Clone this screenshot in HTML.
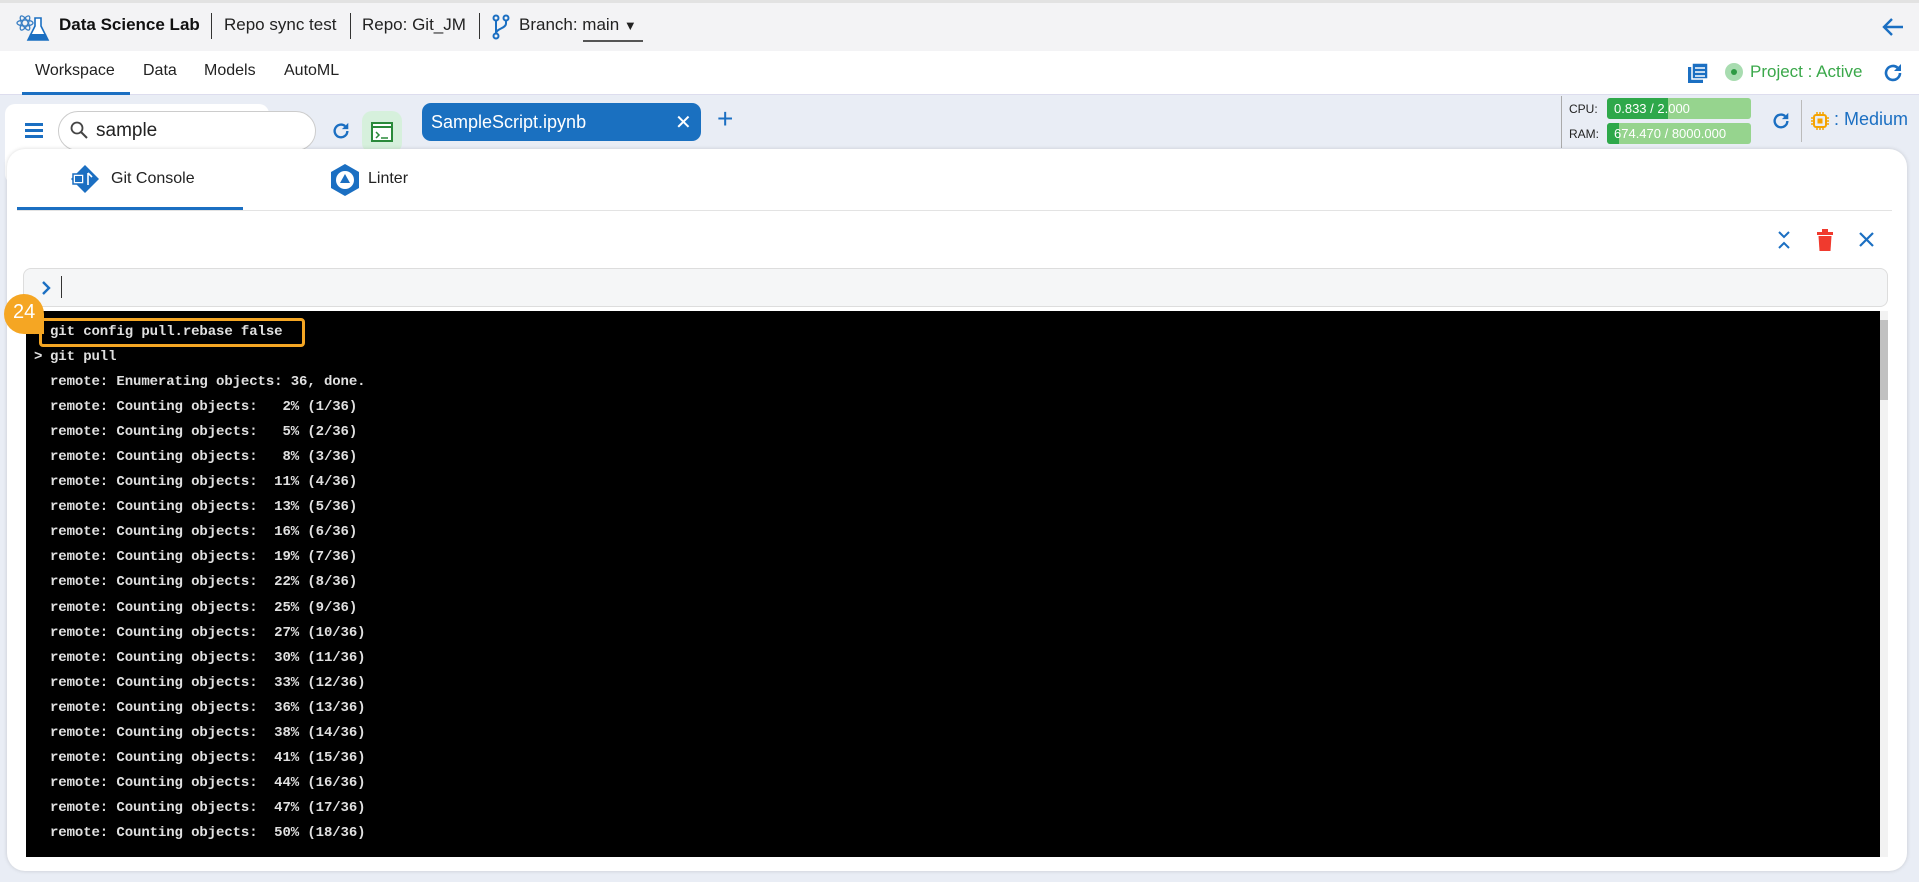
<!DOCTYPE html>
<html><head><meta charset="utf-8"><style>
*{box-sizing:border-box;margin:0;padding:0}
body{width:1919px;height:882px;overflow:hidden;background:#e9edf5;font-family:"Liberation Sans",sans-serif;position:relative;color:#222}
.abs{position:absolute}
#hdr{left:0;top:0;width:1919px;height:51px;background:#f3f3f5;border-top:3px solid #e2e2e2}
#nav{left:0;top:51px;width:1919px;height:44px;background:#fff;border-bottom:1px solid #dde}
.t18{font-size:17px;top:15px;white-space:nowrap}
.sep{width:1px;height:26px;background:#333;top:13px}
.nv{font-size:16px;top:62px;color:#222}
#panel{left:7px;top:149px;width:1900px;height:722px;background:#fff;border-radius:18px;box-shadow:0 0 4px rgba(0,0,0,.15)}
#term{left:26px;top:311px;width:1854px;height:546px;background:#000}
.ln{position:absolute;left:50px;font-family:"Liberation Mono",monospace;font-size:14px;color:#e0e0e0;white-space:pre;font-weight:bold;letter-spacing:-0.1px}
</style></head><body>
<div id="hdr" class="abs"></div>
<svg class="abs" style="left:16px;top:12px" width="34" height="32" viewBox="0 0 34 32"><g fill="none" stroke="#3a7fc4" stroke-width="1.3"><ellipse cx="9" cy="11" rx="8" ry="3"/><ellipse cx="9" cy="11" rx="8" ry="3" transform="rotate(60 9 11)"/><ellipse cx="9" cy="11" rx="8" ry="3" transform="rotate(-60 9 11)"/></g><path d="M19 6h6v8l7 14h-20l7-14z" fill="#fff" stroke="#1b6fc2" stroke-width="1.6"/><path d="M14 22h16l2 6h-20z" fill="#1b6fc2"/></svg>
<div class="abs t18" style="left:59px;font-weight:bold;color:#111">Data Science Lab</div>
<div class="abs sep" style="left:211px"></div>
<div class="abs t18" style="left:224px">Repo sync test</div>
<div class="abs sep" style="left:350px"></div>
<div class="abs t18" style="left:362px">Repo: Git_JM</div>
<div class="abs sep" style="left:479px"></div>
<svg class="abs" style="left:492px;top:14px" width="18" height="26" viewBox="0 0 18 26"><g fill="none" stroke="#1b6fc2" stroke-width="2"><circle cx="4" cy="4" r="2.5"/><circle cx="14" cy="4" r="2.5"/><circle cx="4" cy="22" r="2.5"/><path d="M4 6.5v13M14 6.5v3c0 5-10 5-10 10"/></g></svg>
<div class="abs t18" style="left:519px">Branch: main <span style="font-size:13px">▼</span></div>
<div class="abs" style="left:583px;top:40px;width:60px;height:2px;background:#555"></div>
<svg class="abs" style="left:1882px;top:17px" width="22" height="20" viewBox="0 0 22 20"><path d="M21 10H3M10 2L2 10l8 8" fill="none" stroke="#1b6fc2" stroke-width="2.4"/></svg>

<div id="nav" class="abs"></div>
<div class="abs nv" style="left:35px">Workspace</div>
<div class="abs nv" style="left:143px">Data</div>
<div class="abs nv" style="left:204px">Models</div>
<div class="abs nv" style="left:284px">AutoML</div>
<div class="abs" style="left:22px;top:92px;width:108px;height:3px;background:#1b6fc2"></div>
<svg class="abs" style="left:1687px;top:62px" width="22" height="22" viewBox="0 0 22 22"><rect x="1" y="5" width="15" height="16" fill="#1b6fc2"/><rect x="5" y="1" width="16" height="16" fill="#1b6fc2" stroke="#fff" stroke-width="1.5"/><path d="M8 6h10M8 10h10M8 14h10" stroke="#fff" stroke-width="1.5"/></svg>
<div class="abs" style="left:1725px;top:63px;width:18px;height:18px;border-radius:50%;background:#a8dcb0"></div>
<div class="abs" style="left:1731px;top:69px;width:6px;height:6px;border-radius:50%;background:#2e9a44"></div>
<div class="abs" style="left:1750px;top:62px;font-size:17px;color:#3aa84a">Project : Active</div>
<svg class="abs" style="left:1882px;top:62px" width="22" height="22" viewBox="0 0 22 22"><path d="M18 11a7 7 0 1 1-2.5-5.4" fill="none" stroke="#1b6fc2" stroke-width="2.6"/><path d="M19 2v7h-7z" fill="#1b6fc2"/></svg>

<div class="abs" style="left:5px;top:104px;width:264px;height:80px;background:#fff;border-radius:10px"></div>
<div class="abs" style="left:25px;top:123px;width:18px;height:3px;background:#1b6fc2;box-shadow:0 6px 0 #1b6fc2,0 12px 0 #1b6fc2"></div>
<div class="abs" style="left:58px;top:111px;width:258px;height:40px;border:1px solid #ccc;border-radius:20px;background:#fff"></div>
<svg class="abs" style="left:70px;top:121px" width="18" height="18" viewBox="0 0 18 18"><circle cx="7" cy="7" r="5.5" fill="none" stroke="#444" stroke-width="1.8"/><path d="M11 11l6 6" stroke="#444" stroke-width="2"/></svg>
<div class="abs" style="left:96px;top:120px;font-size:19px">sample</div>
<svg class="abs" style="left:331px;top:121px" width="20" height="20" viewBox="0 0 22 22"><path d="M18 11a7 7 0 1 1-2.5-5.4" fill="none" stroke="#1b6fc2" stroke-width="2.6"/><path d="M19 2v7h-7z" fill="#1b6fc2"/></svg>
<div class="abs" style="left:362px;top:111px;width:40px;height:42px;border-radius:10px;background:#d6f0dc"></div>
<svg class="abs" style="left:371px;top:122px" width="22" height="20" viewBox="0 0 22 20"><rect x="1" y="1" width="20" height="18" fill="#fff" stroke="#2a8a3a" stroke-width="2"/><path d="M1 5h20" stroke="#2a8a3a" stroke-width="2"/><path d="M5 10l3 3-3 3M10 16h7" fill="none" stroke="#2a8a3a" stroke-width="1.5"/></svg>
<div class="abs" style="left:422px;top:103px;width:279px;height:38px;background:#1a70c0;border-radius:9px"></div>
<div class="abs" style="left:431px;top:112px;font-size:18px;color:#fff">SampleScript.ipynb</div>
<div class="abs" style="left:675px;top:110px;font-size:20px;color:#fff">✕</div>
<div class="abs" style="left:717px;top:103px;font-size:28px;color:#1b6fc2">+</div>
<div class="abs" style="left:1561px;top:96px;width:1px;height:52px;background:#aaa"></div>
<div class="abs" style="left:1569px;top:102px;font-size:12px">CPU:</div>
<div class="abs" style="left:1569px;top:127px;font-size:12px">RAM:</div>
<div class="abs" style="left:1607px;top:98px;width:144px;height:21px;background:#96d48e;border-radius:3px"></div>
<div class="abs" style="left:1607px;top:98px;width:61px;height:21px;background:#2ea84a;border-radius:3px 0 0 3px"></div>
<div class="abs" style="left:1614px;top:101px;font-size:13px;color:#fff">0.833 / 2.000</div>
<div class="abs" style="left:1607px;top:123px;width:144px;height:21px;background:#96d48e;border-radius:3px"></div>
<div class="abs" style="left:1607px;top:123px;width:12px;height:21px;background:#2ea84a;border-radius:3px 0 0 3px"></div>
<div class="abs" style="left:1614px;top:126px;font-size:13px;color:#fff">674.470 / 8000.000</div>
<svg class="abs" style="left:1771px;top:111px" width="20" height="20" viewBox="0 0 22 22"><path d="M18 11a7 7 0 1 1-2.5-5.4" fill="none" stroke="#1b6fc2" stroke-width="2.6"/><path d="M19 2v7h-7z" fill="#1b6fc2"/></svg>
<div class="abs" style="left:1801px;top:100px;width:1px;height:42px;background:#bbb"></div>
<svg class="abs" style="left:1810px;top:111px" width="20" height="20" viewBox="0 0 20 20"><rect x="4" y="4" width="12" height="12" rx="2" fill="none" stroke="#f5a300" stroke-width="2"/><rect x="7.5" y="7.5" width="5" height="5" fill="#f5a300"/><path d="M7 1v3M10 1v3M13 1v3M7 16v3M10 16v3M13 16v3M1 7h3M1 10h3M1 13h3M16 7h3M16 10h3M16 13h3" stroke="#f5a300" stroke-width="1.5"/></svg>
<div class="abs" style="left:1834px;top:109px;font-size:18px;color:#1b6fc2">: Medium</div>

<div id="panel" class="abs"></div>
<svg class="abs" style="left:70px;top:164px" width="30" height="30" viewBox="0 0 30 30"><path d="M15 1l14 14-14 14L1 15z" fill="#1b6fc2"/><rect x="3" y="10" width="11" height="10" fill="#fff" stroke="#1b6fc2" stroke-width="1.5"/><rect x="5" y="12" width="7" height="6" fill="#1b6fc2"/><path d="M18 9v12M18 9l4 4" stroke="#fff" stroke-width="1.6" fill="none"/></svg>
<div class="abs" style="left:111px;top:170px;font-size:16px">Git Console</div>
<div class="abs" style="left:17px;top:207px;width:226px;height:3px;background:#1b6fc2"></div>
<svg class="abs" style="left:328px;top:163px" width="34" height="34" viewBox="0 0 34 34"><path d="M17 1l14 8v16l-14 8-14-8V9z" fill="#1b6fc2"/><circle cx="17" cy="17" r="9" fill="#fff"/><path d="M17 11l5 9h-10z" fill="#1b6fc2"/></svg>
<div class="abs" style="left:368px;top:170px;font-size:16px">Linter</div>
<div class="abs" style="left:17px;top:210px;width:1875px;height:1px;background:#e3e3e3"></div>
<svg class="abs" style="left:1776px;top:230px" width="16" height="20" viewBox="0 0 16 20"><path d="M3 2l5 5 5-5M3 18l5-5 5 5" fill="none" stroke="#1b6fc2" stroke-width="2"/></svg>
<svg class="abs" style="left:1816px;top:229px" width="18" height="22" viewBox="0 0 18 22"><rect x="1" y="3" width="16" height="3" fill="#f03a2e"/><rect x="6" y="0" width="6" height="3" fill="#f03a2e"/><path d="M2.5 7h13l-1 15h-11z" fill="#f03a2e"/></svg>
<svg class="abs" style="left:1858px;top:231px" width="17" height="17" viewBox="0 0 17 17"><path d="M2 2l13 13M15 2L2 15" stroke="#1b6fc2" stroke-width="2.2"/></svg>
<div class="abs" style="left:23px;top:268px;width:1865px;height:39px;background:#f5f6f7;border:1px solid #ddd;border-radius:8px"></div>
<svg class="abs" style="left:41px;top:280px" width="10" height="16" viewBox="0 0 10 16"><path d="M2 2l6 6-6 6" fill="none" stroke="#1b6fc2" stroke-width="2.4"/></svg>
<div class="abs" style="left:61px;top:276px;width:1px;height:22px;background:#333"></div>

<div id="term" class="abs"></div>
<div class="abs" style="left:1880px;top:311px;width:8px;height:546px;background:#f2f2f2"></div>
<div class="abs" style="left:1880px;top:320px;width:8px;height:80px;background:#c1c1c1"></div>
<div class="ln" style="left:34px;top:324px">&gt;</div>
<div class="ln" style="top:324px">git config pull.rebase false</div>
<div class="ln" style="left:34px;top:349px">&gt;</div>
<div class="ln" style="top:349px">git pull</div>
<div class="ln" style="top:374px">remote: Enumerating objects: 36, done.</div>
<div class="ln" style="top:399px">remote: Counting objects:   2% (1/36)</div>
<div class="ln" style="top:424px">remote: Counting objects:   5% (2/36)</div>
<div class="ln" style="top:449px">remote: Counting objects:   8% (3/36)</div>
<div class="ln" style="top:474px">remote: Counting objects:  11% (4/36)</div>
<div class="ln" style="top:499px">remote: Counting objects:  13% (5/36)</div>
<div class="ln" style="top:524px">remote: Counting objects:  16% (6/36)</div>
<div class="ln" style="top:549px">remote: Counting objects:  19% (7/36)</div>
<div class="ln" style="top:574px">remote: Counting objects:  22% (8/36)</div>
<div class="ln" style="top:600px">remote: Counting objects:  25% (9/36)</div>
<div class="ln" style="top:625px">remote: Counting objects:  27% (10/36)</div>
<div class="ln" style="top:650px">remote: Counting objects:  30% (11/36)</div>
<div class="ln" style="top:675px">remote: Counting objects:  33% (12/36)</div>
<div class="ln" style="top:700px">remote: Counting objects:  36% (13/36)</div>
<div class="ln" style="top:725px">remote: Counting objects:  38% (14/36)</div>
<div class="ln" style="top:750px">remote: Counting objects:  41% (15/36)</div>
<div class="ln" style="top:775px">remote: Counting objects:  44% (16/36)</div>
<div class="ln" style="top:800px">remote: Counting objects:  47% (17/36)</div>
<div class="ln" style="top:825px">remote: Counting objects:  50% (18/36)</div>
<div class="abs" style="left:39px;top:318px;width:266px;height:29px;border:3px solid #f5a623;border-radius:4px"></div>
<div class="abs" style="left:4px;top:294px;width:40px;height:40px;background:#f5a623;border-radius:50% 50% 0 50%"></div>
<div class="abs" style="left:13px;top:301px;font-size:20px;color:#fff">24</div>
</body></html>
